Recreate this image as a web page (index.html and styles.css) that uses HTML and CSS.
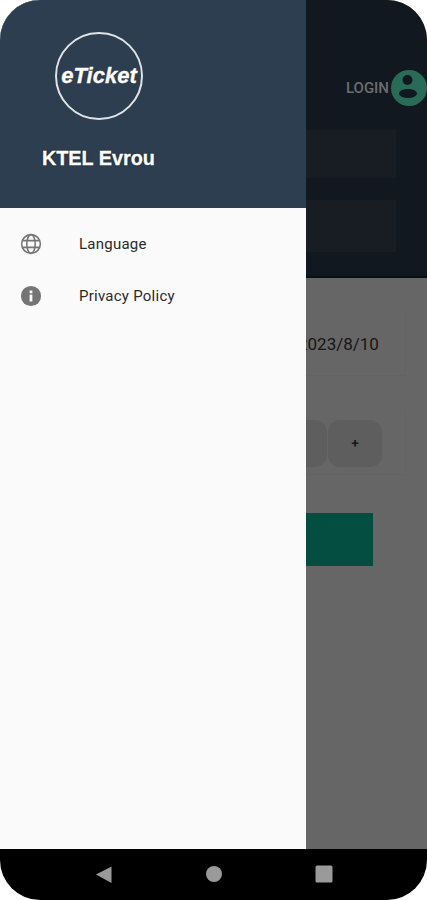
FILE: index.html
```html
<!DOCTYPE html>
<html lang="en">
<head>
    <meta charset="UTF-8">
    <meta name="viewport" content="width=device-width, initial-scale=1.0">
    <title>KTEL Evrou</title>
    <link rel="stylesheet" href="styles.css">
</head>
<body>
    <div class="screen">
        <div class="app">
            <!-- page behind the open drawer -->
            <div class="top">
                <div class="login-row">
                    <span class="login">LOGIN</span>
                    <svg class="avatar" viewBox="0 0 36 36">
                        <circle cx="18" cy="18" r="18" fill="#286c57"/>
                        <circle cx="16.500" cy="10" r="5" fill="#11181f"/>
                        <ellipse cx="17" cy="23.500" rx="9" ry="4.500" fill="#11181f"/>
                    </svg>
                </div>
                <div class="top-field first"></div>
                <div class="top-field second"></div>
            </div>
            <div class="form">
                <div class="card date-card"><span class="date">2023/8/10</span></div>
                <div class="card qty-card">
                    <div class="qty-btn">-</div>
                    <div class="qty-btn">+</div>
                </div>
                <div class="search-btn"></div>
            </div>
        </div>

        <div class="navbar">
            <svg class="nav-icon" viewBox="0 0 18 18"><path d="M1 9.500 16.500 1.500V18Z" fill="#9a9a9a"/></svg>
            <svg class="nav-icon" viewBox="0 0 18 18"><circle cx="9" cy="9" r="8" fill="#9a9a9a"/></svg>
            <svg class="nav-icon" viewBox="0 0 18 18"><rect x="0.500" y="0.500" width="17" height="17" rx="1.500" fill="#9a9a9a"/></svg>
        </div>

        <div class="drawer">
            <div class="drawer-head">
                <div class="logo"><span>eTicket</span></div>
                <h2>KTEL Evrou</h2>
            </div>
            <ul class="menu">
                <li>
                    <svg class="menu-icon" viewBox="0 0 24 24" fill="none" stroke="#757575" stroke-width="1.700">
                        <circle cx="12" cy="12" r="10.200"/>
                        <ellipse cx="12" cy="12" rx="4.600" ry="10.200"/>
                        <path d="M2.800 8.300H21.200M2.800 15.700H21.200"/>
                    </svg>
                    <span>Language</span>
                </li>
                <li>
                    <svg class="menu-icon" viewBox="0 0 24 24">
                        <circle cx="12" cy="12" r="11" fill="#757575"/>
                        <rect x="10.500" y="10.500" width="3" height="7.500" fill="#fafafa"/>
                        <rect x="10.500" y="6" width="3" height="3" fill="#fafafa"/>
                    </svg>
                    <span>Privacy Policy</span>
                </li>
            </ul>
        </div>
    </div>
</body>
</html>
```

FILE: styles.css
```css
* {margin: 0; padding: 0; box-sizing: border-box;}
html, body {
    background-color: #fff;
}
.screen {
    position: relative;
    width: 427px;
    height: 900px;
    border-radius: 40px;
    overflow: hidden;
    display: flex;
    flex-direction: column;
    font-family: "Roboto", "Liberation Sans", sans-serif;
}
.app {
    flex: 1;
    display: flex;
    flex-direction: column;
    background-color: #666;
}
.top {
    height: 278px;
    background-color: #11181f;
    border-bottom: 2px solid #0a0f14;
    padding: 70px 0 0 306px;
}
.login-row {
    display: flex;
    justify-content: flex-end;
    align-items: center;
    gap: 2px;
    height: 35px;
}
.login {
    font-size: 15px;
    font-weight: 500;
    color: #6c6d70;
}
.avatar {
    width: 36px;
    height: 36px;
}
.top-field {
    width: 90px;
    background-color: #181d23;
}
.first {
    height: 48px;
    margin-top: 25px;
}
.second {
    height: 52px;
    margin-top: 22px;
}
.form {
    padding: 34px 21px 0 306px;
}
.card {
    border: 1px solid #636363;
    border-top: none;
    border-left: none;
}
.date-card {
    height: 64px;
    display: flex;
    align-items: center;
    padding-top: 1px;
}
.date {
    margin-left: -8px;
    font-size: 17px;
    color: #161616;
}
.qty-card {
    height: 63px;
    margin-top: 36px;
    display: flex;
    align-items: center;
    gap: 1px;
}
.qty-btn {
    width: 54px;
    height: 47px;
    border-radius: 12px;
    background-color: #5e5e5e;
    color: #161616;
    font-size: 13px;
    font-weight: bold;
    display: flex;
    justify-content: center;
    align-items: center;
}
.qty-btn:first-child {
    width: 21px;
    border-radius: 0 12px 12px 0;
    color: transparent;
}
.search-btn {
    width: 67px;
    height: 53px;
    margin-top: 38px;
    background-color: #034e41;
}
.navbar {
    height: 51px;
    background-color: #000;
    display: flex;
    justify-content: center;
    align-items: center;
    gap: 92px;
    padding-bottom: 2px;
}
.nav-icon {
    width: 18px;
    height: 18px;
}
.drawer {
    position: absolute;
    top: 0;
    left: 0;
    bottom: 51px;
    width: 306px;
    background-color: #fafafa;
}
.drawer-head {
    height: 208px;
    background-color: #2c3e50;
    padding-top: 32px;
    color: #fff;
}
.logo {
    width: 88px;
    height: 88px;
    margin-left: 55px;
    border: 2px solid #dfe3e6;
    border-radius: 50%;
    display: flex;
    justify-content: center;
    align-items: center;
}
.logo span {
    font-family: "Liberation Sans", sans-serif;
    font-size: 22px;
    font-weight: bold;
    font-style: italic;
    -webkit-text-stroke: .4px #fff;
    text-shadow: 0 0 1px #000;
}
.drawer-head h2 {
    margin: 26px 0 0 42px;
    font-size: 19.800px;
    font-weight: bold;
    font-family: "Liberation Sans", sans-serif;
    line-height: 24px;
    -webkit-text-stroke: .3px #fff;
    text-shadow: 0 0 2px #0b1520;
}
.menu {
    list-style: none;
    padding-top: 10px;
}
.menu li {
    height: 52px;
    display: flex;
    align-items: center;
    gap: 37px;
    padding-left: 20px;
    font-size: 15px;
    letter-spacing: .25px;
    color: #2a2a2a;
}
.menu-icon {
    width: 22px;
    height: 22px;
}
```
